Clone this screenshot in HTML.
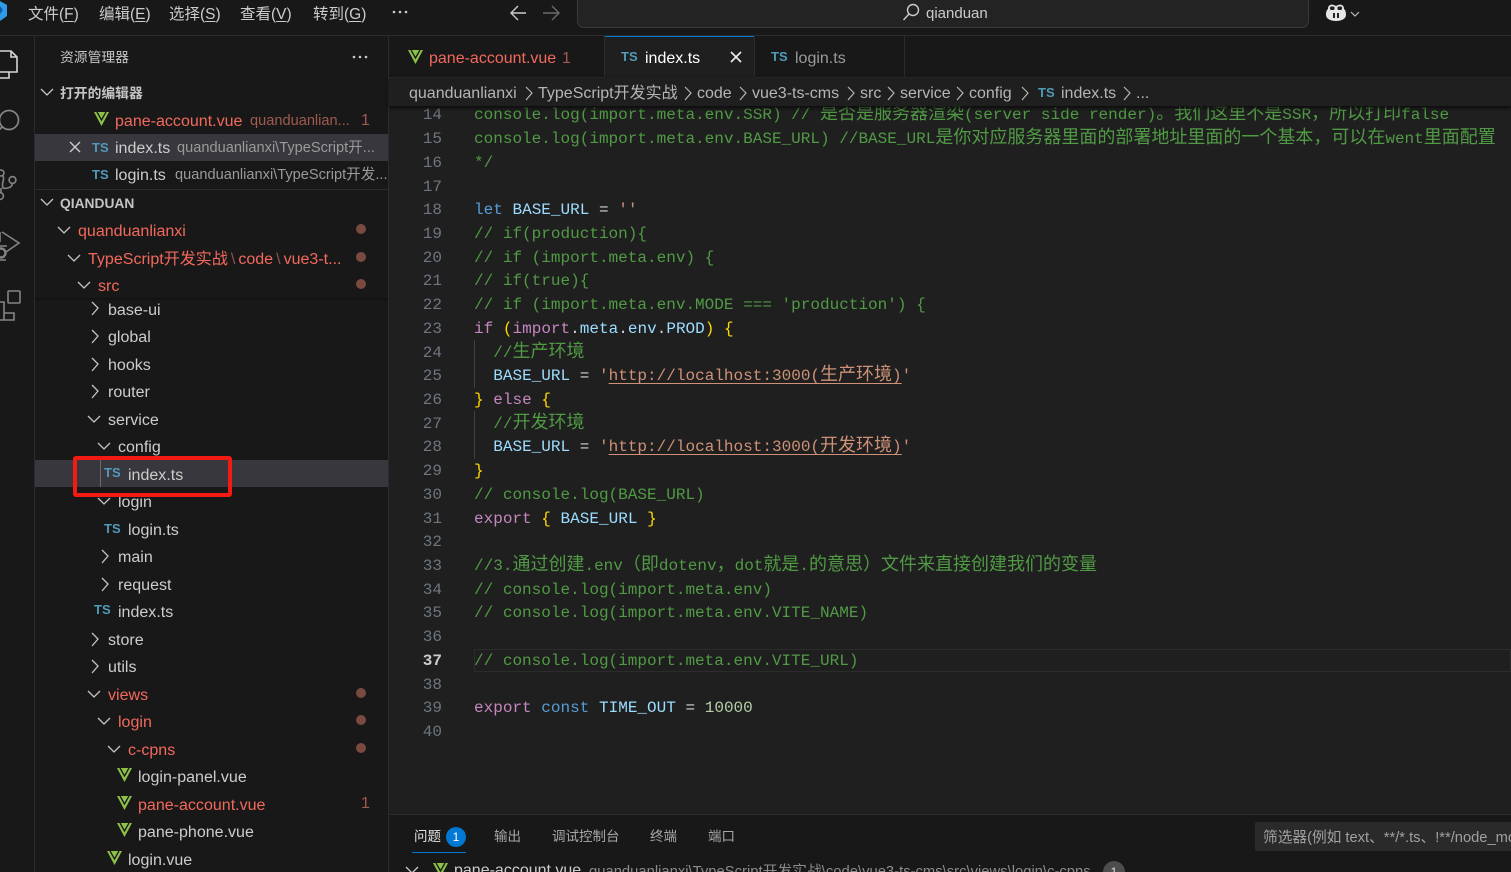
<!DOCTYPE html>
<html lang="zh-CN"><head><meta charset="utf-8"><title>index.ts</title>
<style>
html,body{margin:0;padding:0;width:1511px;height:872px;overflow:hidden;background:#181818}
body{position:relative;font-family:"Liberation Sans","Noto Sans CJK SC",sans-serif;color:#ccc;font-size:16px}
.a{position:absolute;white-space:nowrap}
.ln{position:absolute;left:0;height:27px;line-height:27px;margin-top:1px;white-space:nowrap;font-size:16.05px;color:#ccc}
.red{color:#f2695c}
.dim{color:#9a9a9a;font-size:14.6px;margin-top:1px}
.ts{position:absolute;font:bold 13px/14px "Liberation Sans",sans-serif;color:#519aba;white-space:nowrap}
.dot{position:absolute;left:356px;width:10px;height:10px;border-radius:50%;background:#7a4a40}
svg{position:absolute;overflow:visible}
u{text-decoration-thickness:1px;text-underline-offset:2px}
#code{position:absolute;left:474px;top:104.4px;font:16.03px/23.73px "Liberation Mono",monospace;color:#d4d4d4;white-space:pre}
#code div{height:23.73px}
#code i{font:18px/0 "Noto Sans CJK SC",sans-serif;font-style:normal}
#nums{position:absolute;left:400px;width:42px;top:104.4px;text-align:right;font:16px/23.73px "Liberation Mono",monospace;color:#6e7681}
#nums div{height:23.73px}
.g{color:#519a45}.k{color:#c586c0}.b{color:#569cd6}.v{color:#9cdcfe}.y{color:#ffd700}.s{color:#ce9178}.n{color:#b5cea8}.f{color:#d4d4d4}
.su{text-decoration:underline;text-underline-offset:3px;text-decoration-thickness:1px}
.bc{position:absolute;top:80px;height:27px;line-height:28px;font-size:16px;color:#b5b5b5;white-space:nowrap}
.tab{position:absolute;top:37px;height:42px;line-height:43px;font-size:16px;white-space:nowrap}
.pt{position:absolute;top:827px;font-size:13.5px;line-height:20px;color:#a8a8a8;white-space:nowrap}
.sep{color:#8a5850;margin:0 3px}
</style></head><body>

<!-- title bar -->
<div class="a" style="left:0;top:0;width:1511px;height:35px;background:#181818;border-bottom:1px solid #2b2b2b;box-sizing:content-box"></div>
<svg style="left:0;top:0" width="10" height="24"><path d="M0 1 L7 5 V16 L0 21 Z" fill="#2f9be8"/><path d="M0 6 L3 10 L0 14Z" fill="#0b5ea8"/></svg>
<div class="a" style="left:28px;top:4px;line-height:21px;font-size:15.5px">文件(<u>F</u>)</div>
<div class="a" style="left:99px;top:4px;line-height:21px;font-size:15.5px">编辑(<u>E</u>)</div>
<div class="a" style="left:169px;top:4px;line-height:21px;font-size:15.5px">选择(<u>S</u>)</div>
<div class="a" style="left:240px;top:4px;line-height:21px;font-size:15.5px">查看(<u>V</u>)</div>
<div class="a" style="left:313px;top:4px;line-height:21px;font-size:15.5px">转到(<u>G</u>)</div>
<svg style="left:392px;top:10px" width="18" height="4"><circle cx="2" cy="2" r="1.3" fill="#ccc"/><circle cx="8" cy="2" r="1.3" fill="#ccc"/><circle cx="14" cy="2" r="1.3" fill="#ccc"/></svg>
<svg style="left:510px;top:5px" width="18" height="16" fill="none" stroke="#ccc" stroke-width="1.4"><path d="M1 8 H16 M8 1 L1 8 L8 15"/></svg>
<svg style="left:542px;top:5px" width="18" height="16" fill="none" stroke="#6a6a6a" stroke-width="1.4"><path d="M1 8 H16 M10 1 L17 8 L10 15"/></svg>
<div class="a" style="left:577px;top:-6px;width:730px;height:32px;background:#232323;border:1px solid #3a3a3a;border-radius:7px"></div>
<svg style="left:902px;top:3px" width="18" height="18" fill="none" stroke="#ccc" stroke-width="1.4"><circle cx="11" cy="7" r="5.5"/><path d="M7 11 L1.5 17"/></svg>
<div class="a" style="left:926px;top:4px;line-height:20px;font-size:15px;color:#ccc">qianduan</div>
<svg style="left:1325px;top:3px" width="36" height="20"><path d="M1 12 C1 8 2 7 3 6 C3 2 6 1 9 2 L11 3 L13 2 C16 1 19 2 19 6 C20 7 21 8 21 12 C21 16 16 18 11 18 C6 18 1 16 1 12Z" fill="#e6e6e6"/><rect x="5" y="3.5" width="4.5" height="3.5" fill="#222" rx="1"/><rect x="12.5" y="3.5" width="4.5" height="3.5" fill="#222" rx="1"/><rect x="8" y="10" width="2" height="5" fill="#222"/><rect x="12" y="10" width="2" height="5" fill="#222"/><path d="M26 9 L30 13 L34 9" fill="none" stroke="#bbb" stroke-width="1.2"/></svg>

<!-- activity bar -->
<div class="a" style="left:0;top:36px;width:34px;height:836px;background:#181818;border-right:1px solid #2b2b2b"></div>
<svg style="left:0;top:48px" width="22" height="34" fill="none" stroke="#d5d5d5" stroke-width="1.6"><path d="M0 3 H11 L17 9 V24 H0 M11 3 V9 H17 M0 30 H9 V24"/></svg>
<svg style="left:0;top:105px" width="22" height="30" fill="none" stroke="#858585" stroke-width="1.7"><circle cx="9" cy="15" r="9.5"/><path d="M2 22 L-3 27"/></svg>
<svg style="left:0;top:168px" width="20" height="34" fill="none" stroke="#858585" stroke-width="1.6"><circle cx="1" cy="5" r="3"/><circle cx="12.5" cy="12" r="3.4"/><circle cx="0" cy="28" r="3.4"/><path d="M3 8 C5 12 1 15 3 20 C8 21 12 19 12.5 15.5 M1 20 V25"/></svg>
<svg style="left:0;top:228px" width="22" height="36" fill="none" stroke="#858585" stroke-width="1.6"><path d="M2 4 L19 15 L6 24"/><path d="M0 4 V14"/><circle cx="1" cy="25" r="4.5" stroke-width="2.4"/><path d="M-2 18 L7 18 M-2 32 L6 32" stroke-width="1.4"/></svg>
<svg style="left:0;top:288px" width="22" height="34" fill="none" stroke="#858585" stroke-width="1.6"><rect x="8" y="3" width="12" height="12" rx="1"/><path d="M0 14 H4 V25 H14 V32 H0 M4 25 V32"/></svg>

<!-- sidebar -->
<div class="a" style="left:35px;top:36px;width:353px;height:836px;background:#181818;border-right:1px solid #2b2b2b"></div>
<div class="a" style="left:60px;top:48px;line-height:20px;font-size:13.8px;color:#c4c4c4">资源管理器</div>
<svg style="left:352px;top:55px" width="18" height="4"><circle cx="2" cy="2" r="1.3" fill="#ccc"/><circle cx="8" cy="2" r="1.3" fill="#ccc"/><circle cx="14" cy="2" r="1.3" fill="#ccc"/></svg>

<svg style="left:0;top:0" width="388" height="872" fill="none" stroke="#c5c5c5" stroke-width="1.3">
<path d="M41 89 L47 95 L53 89"/><path d="M41 199 L47 205 L53 199"/>
<path d="M58 227 L64 233 L70 227"/><path d="M68 255 L74 261 L80 255"/><path d="M78 282 L84 288 L90 282"/>
<path d="M92 302 L98 308 L92 315"/><path d="M92 330 L98 336 L92 343"/><path d="M92 358 L98 364 L92 371"/><path d="M92 385 L98 391 L92 398"/>
<path d="M88 416 L94 422 L100 416"/><path d="M98 443 L104 449 L110 443"/><path d="M98 498 L104 504 L110 498"/>
<path d="M102 550 L108 556 L102 563"/><path d="M102 578 L108 584 L102 591"/>
<path d="M92 633 L98 639 L92 646"/><path d="M92 660 L98 666 L92 673"/>
<path d="M88 691 L94 697 L100 691"/><path d="M98 718 L104 724 L110 718"/><path d="M108 746 L114 752 L120 746"/>
</svg>

<div class="a" style="left:60px;top:84px;line-height:20px;font-size:13.8px;font-weight:bold;color:#c4c4c4">打开的编辑器</div>
<svg style="left:94px;top:112px" width="16" height="14"><path d="M0 0 H15 L7.5 14Z" fill="#8dc149"/><path d="M3 0 L7.5 8 L12 0" fill="none" stroke="#181818" stroke-width="1.3"/><path d="M5.6 0 H9.4 L7.5 3.4Z" fill="#8dc149"/></svg>
<div class="ln red" style="left:115px;top:107px">pane-account.vue</div>
<div class="a" style="left:250px;top:108px;line-height:27px;font-size:14.6px;color:#a05a50">quanduanlian...</div>
<div class="a" style="left:361px;top:107px;line-height:27px;font-size:16px;color:#a05a50">1</div>

<div class="a" style="left:35px;top:134px;width:353px;height:27px;background:#37373d"></div>
<svg style="left:69px;top:141px" width="12" height="12" stroke="#ccc" stroke-width="1.4"><path d="M1 1 L11 11 M11 1 L1 11"/></svg>
<div class="ts" style="left:92px;top:141px">TS</div>
<div class="ln" style="left:115px;top:134px">index.ts</div>
<div class="a dim" style="left:177px;top:134px;line-height:27px">quanduanlianxi\TypeScript开...</div>
<div class="ts" style="left:92px;top:168px">TS</div>
<div class="ln" style="left:115px;top:161px">login.ts</div>
<div class="a dim" style="left:175px;top:161px;line-height:27px">quanduanlianxi\TypeScript开发...</div>
<div class="a" style="left:35px;top:189px;width:353px;height:1px;background:#2b2b2b"></div>

<div class="a" style="left:60px;top:194px;line-height:20px;font-size:13.8px;font-weight:bold;color:#c4c4c4">QIANDUAN</div>
<div class="ln red" style="left:78px;top:217px">quanduanlianxi</div><div class="dot" style="top:224px"></div>
<div class="ln red" style="left:88px;top:245px">TypeScript开发实战<span class="sep">\</span>code<span class="sep">\</span>vue3-t...</div><div class="dot" style="top:252px"></div>
<div class="ln red" style="left:98px;top:272px">src</div><div class="dot" style="top:279px"></div>
<div class="a" style="left:35px;top:298px;width:353px;height:3px;background:linear-gradient(#111,#181818)"></div>

<div class="ln" style="left:108px;top:296px">base-ui</div>
<div class="ln" style="left:108px;top:323px">global</div>
<div class="ln" style="left:108px;top:351px">hooks</div>
<div class="ln" style="left:108px;top:378px">router</div>
<div class="ln" style="left:108px;top:406px">service</div>
<div class="ln" style="left:118px;top:433px">config</div>

<div class="a" style="left:35px;top:460px;width:353px;height:27px;background:#37373d"></div>
<div class="a" style="left:100px;top:460px;width:1px;height:27px;background:#6a6a6a"></div>
<div class="ts" style="left:104px;top:466px">TS</div>
<div class="ln" style="left:128px;top:461px">index.ts</div>

<div class="ln" style="left:118px;top:488px">login</div>
<div class="a" style="left:73px;top:456px;width:151px;height:33px;border:4px solid #f21a13;border-radius:3px"></div>

<div class="ts" style="left:104px;top:522px">TS</div>
<div class="ln" style="left:128px;top:516px">login.ts</div>
<div class="ln" style="left:118px;top:543px">main</div>
<div class="ln" style="left:118px;top:571px">request</div>
<div class="ts" style="left:94px;top:603px">TS</div>
<div class="ln" style="left:118px;top:598px">index.ts</div>
<div class="ln" style="left:108px;top:626px">store</div>
<div class="ln" style="left:108px;top:653px">utils</div>
<div class="ln red" style="left:108px;top:681px">views</div><div class="dot" style="top:688px"></div>
<div class="ln red" style="left:118px;top:708px">login</div><div class="dot" style="top:715px"></div>
<div class="ln red" style="left:128px;top:736px">c-cpns</div><div class="dot" style="top:743px"></div>
<svg style="left:117px;top:768px" width="16" height="14"><path d="M0 0 H15 L7.5 14Z" fill="#8dc149"/><path d="M3 0 L7.5 8 L12 0" fill="none" stroke="#181818" stroke-width="1.3"/><path d="M5.6 0 H9.4 L7.5 3.4Z" fill="#8dc149"/></svg>
<div class="ln" style="left:138px;top:763px">login-panel.vue</div>
<svg style="left:117px;top:796px" width="16" height="14"><path d="M0 0 H15 L7.5 14Z" fill="#8dc149"/><path d="M3 0 L7.5 8 L12 0" fill="none" stroke="#181818" stroke-width="1.3"/><path d="M5.6 0 H9.4 L7.5 3.4Z" fill="#8dc149"/></svg>
<div class="ln red" style="left:138px;top:791px">pane-account.vue</div>
<div class="a" style="left:361px;top:790px;line-height:27px;font-size:16px;color:#a05a50">1</div>
<svg style="left:117px;top:823px" width="16" height="14"><path d="M0 0 H15 L7.5 14Z" fill="#8dc149"/><path d="M3 0 L7.5 8 L12 0" fill="none" stroke="#181818" stroke-width="1.3"/><path d="M5.6 0 H9.4 L7.5 3.4Z" fill="#8dc149"/></svg>
<div class="ln" style="left:138px;top:818px">pane-phone.vue</div>
<svg style="left:107px;top:851px" width="16" height="14"><path d="M0 0 H15 L7.5 14Z" fill="#8dc149"/><path d="M3 0 L7.5 8 L12 0" fill="none" stroke="#181818" stroke-width="1.3"/><path d="M5.6 0 H9.4 L7.5 3.4Z" fill="#8dc149"/></svg>
<div class="ln" style="left:128px;top:846px">login.vue</div>

<!-- editor -->
<div class="a" style="left:389px;top:78px;width:1122px;height:736px;background:#1f1f1f"></div>
<div class="a" style="left:474px;top:649px;width:1037px;height:23px;border:1px solid #2c2c2c;box-sizing:border-box"></div>
<div class="a" style="left:474px;top:340px;width:1px;height:48px;background:#404040"></div>
<div class="a" style="left:474px;top:411px;width:1px;height:48px;background:#404040"></div>

<div id="nums"><div>14</div><div>15</div><div>16</div><div>17</div><div>18</div><div>19</div><div>20</div><div>21</div><div>22</div><div>23</div><div>24</div><div>25</div><div>26</div><div>27</div><div>28</div><div>29</div><div>30</div><div>31</div><div>32</div><div>33</div><div>34</div><div>35</div><div>36</div><div style="color:#ccc;font-weight:bold">37</div><div>38</div><div>39</div><div>40</div></div>

<div id="code"><div class="g">console.log(import.meta.env.SSR) // <i>是否是服务器渲染</i>(server side render)<i>。我们这里不是</i>SSR<i>，所以打印</i>false</div><div class="g">console.log(import.meta.env.BASE_URL) //BASE_URL<i>是你对应服务器里面的部署地址里面的一个基本，可以在</i>went<i>里面配置</i></div><div class="g">*/</div><div> </div><div><span class="b">let</span> <span class="v">BASE_URL</span> = <span class="s">''</span></div><div class="g">// if(production){</div><div class="g">// if (import.meta.env) {</div><div class="g">// if(true){</div><div class="g">// if (import.meta.env.MODE === 'production') {</div><div><span class="k">if</span> <span class="y">(</span><span class="k">import</span>.<span class="v">meta</span>.<span class="v">env</span>.<span class="v">PROD</span><span class="y">)</span> <span class="y">{</span></div><div>  <span class="g">//<i>生产环境</i></span></div><div>  <span class="v">BASE_URL</span> = <span class="s">'<span class="su">http://localhost:3000(<i>生产环境</i>)</span>'</span></div><div><span class="y">}</span> <span class="k">else</span> <span class="y">{</span></div><div>  <span class="g">//<i>开发环境</i></span></div><div>  <span class="v">BASE_URL</span> = <span class="s">'<span class="su">http://localhost:3000(<i>开发环境</i>)</span>'</span></div><div><span class="y">}</span></div><div class="g">// console.log(BASE_URL)</div><div><span class="k">export</span> <span class="y">{</span> <span class="v">BASE_URL</span> <span class="y">}</span></div><div> </div><div class="g">//3.<i>通过创建</i>.env<i>（即</i>dotenv<i>，</i>dot<i>就是</i>.<i>的意思）文件来直接创建我们的变量</i></div><div class="g">// console.log(import.meta.env)</div><div class="g">// console.log(import.meta.env.VITE_NAME)</div><div> </div><div class="g">// console.log(import.meta.env.VITE_URL)</div><div> </div><div><span class="k">export</span> <span class="b">const</span> <span class="v">TIME_OUT</span> = <span class="n">10000</span></div><div> </div></div>

<!-- tabs -->
<div class="a" style="left:389px;top:36px;width:1122px;height:42px;background:#181818;border-bottom:1px solid #2b2b2b;box-sizing:border-box"></div>
<svg style="left:408px;top:50px" width="16" height="14"><path d="M0 0 H15 L7.5 14Z" fill="#8dc149"/><path d="M3 0 L7.5 8 L12 0" fill="none" stroke="#181818" stroke-width="1.3"/><path d="M5.6 0 H9.4 L7.5 3.4Z" fill="#8dc149"/></svg>
<div class="tab red" style="left:429px">pane-account.vue</div>
<div class="tab" style="left:562px;color:#a05a50">1</div>
<div class="a" style="left:604px;top:36px;width:1px;height:42px;background:#2b2b2b"></div>
<div class="a" style="left:605px;top:36px;width:149px;height:43px;background:#1f1f1f;border-top:1px solid #0078d4;box-sizing:border-box"></div>
<div class="a" style="left:754px;top:36px;width:1px;height:42px;background:#2b2b2b"></div>
<div class="a" style="left:904px;top:36px;width:1px;height:42px;background:#2b2b2b"></div>
<div class="ts" style="left:621px;top:50px">TS</div>
<div class="tab" style="left:645px;color:#fff">index.ts</div>
<svg style="left:730px;top:51px" width="12" height="12" stroke="#eee" stroke-width="1.6"><path d="M1 1 L11 11 M11 1 L1 11"/></svg>
<div class="ts" style="left:771px;top:50px">TS</div>
<div class="tab" style="left:795px;color:#9a9a9a">login.ts</div>

<!-- breadcrumb -->
<div class="a" style="left:389px;top:78px;width:1122px;height:28px;background:#1f1f1f;box-shadow:0 2px 4px #0b0b0b"></div>
<div class="bc" style="left:409px">quanduanlianxi</div>
<div class="bc" style="left:538px">TypeScript开发实战</div>
<div class="bc" style="left:697px">code</div>
<div class="bc" style="left:752px">vue3-ts-cms</div>
<div class="bc" style="left:860px">src</div>
<div class="bc" style="left:900px">service</div>
<div class="bc" style="left:969px">config</div>
<div class="ts" style="left:1038px;top:86px">TS</div>
<div class="bc" style="left:1061px">index.ts</div>
<div class="bc" style="left:1136px">...</div>
<svg style="left:0;top:0" width="1200" height="110" fill="none" stroke="#b5b5b5" stroke-width="1.2"><path d="M526 87 L532 93 L526 100"/><path d="M685 87 L691 93 L685 100"/><path d="M740 87 L746 93 L740 100"/><path d="M848 87 L854 93 L848 100"/><path d="M888 87 L894 93 L888 100"/><path d="M957 87 L963 93 L957 100"/><path d="M1022 87 L1028 93 L1022 100"/><path d="M1124 87 L1130 93 L1124 100"/></svg>

<!-- panel -->
<div class="a" style="left:389px;top:814px;width:1122px;height:58px;background:#181818;border-top:1px solid #2b2b2b;box-sizing:border-box"></div>
<div class="pt" style="left:414px;color:#e0e0e0">问题</div>
<div class="a" style="left:446px;top:827px;width:20px;height:20px;border-radius:50%;background:#0078d4;color:#fff;font-size:12px;line-height:20px;text-align:center">1</div>
<div class="a" style="left:412px;top:852px;width:54px;height:1px;background:#0078d4"></div>
<div class="pt" style="left:494px">输出</div>
<div class="pt" style="left:552px">调试控制台</div>
<div class="pt" style="left:650px">终端</div>
<div class="pt" style="left:708px">端口</div>
<div class="a" style="left:1255px;top:822px;width:256px;height:29px;background:#2a2a2a;border-radius:2px 0 0 2px;overflow:hidden;color:#a0a0a0;font-size:14.7px;line-height:32px;padding-left:8px;box-sizing:border-box">筛选器(例如 text、**/*.ts、!**/node_modules</div>
<svg style="left:405px;top:866px" width="14" height="8" fill="none" stroke="#ccc" stroke-width="1.3"><path d="M1 1 L7 7 L13 1"/></svg>
<svg style="left:433px;top:863px" width="16" height="14"><path d="M0 0 H15 L7.5 14Z" fill="#8dc149"/><path d="M3 0 L7.5 8 L12 0" fill="none" stroke="#181818" stroke-width="1.3"/><path d="M5.6 0 H9.4 L7.5 3.4Z" fill="#8dc149"/></svg>
<div class="a" style="left:454px;top:861px;line-height:20px;font-size:16px;color:#ccc">pane-account.vue</div>
<div class="a" style="left:589px;top:862px;line-height:20px;font-size:14.8px;color:#8c8c8c">quanduanlianxi\TypeScript开发实战\code\vue3-ts-cms\src\views\login\c-cpns</div>
<div class="a" style="left:1103px;top:861px;width:22px;height:22px;border-radius:50%;background:#4d4d4d;color:#ddd;font-size:12px;line-height:22px;text-align:center">1</div>
</body></html>
